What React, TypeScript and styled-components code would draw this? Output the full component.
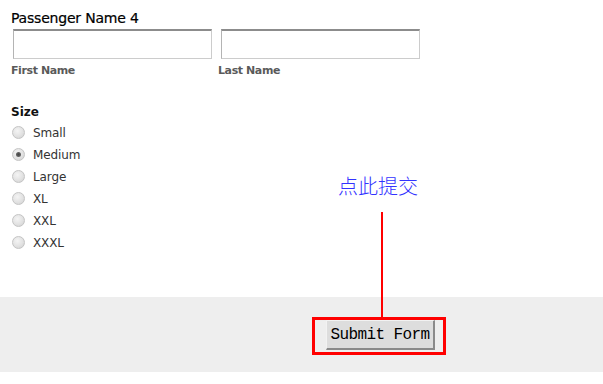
import React from "react";
import styled, { createGlobalStyle } from "styled-components";

const GlobalStyle = createGlobalStyle`
  html, body { margin: 0; padding: 0; background: #ffffff; }
  body { font-family: "DejaVu Sans", Verdana, sans-serif; }
  * { box-sizing: border-box; }
`;

const Page = styled.div`
  position: relative;
  width: 603px;
  height: 384px;
  overflow: hidden;
  background: #ffffff;
`;

const Content = styled.div`
  padding: 10px 11px 0;
  display: flex;
  flex-direction: column;
`;

const Title = styled.div`
  font-size: 14px;
  line-height: 16px;
  letter-spacing: -0.2px;
  color: #000000;
  -webkit-text-stroke: 0.2px #000;
`;

const NameRow = styled.div`
  display: grid;
  grid-template-columns: 207px 207px;
  margin-top: 3px;
`;

const Field = styled.div`
  display: flex;
  flex-direction: column;
`;

const TextInput = styled.input<{ $offset: number }>`
  width: 199px;
  height: 30px;
  margin: 0 0 0 ${(p) => p.$offset}px;
  padding: 0 4px;
  border: 1px solid #cccccc;
  border-top: 2px solid #8c8c8c;
  border-left-color: #b4b4b4;
  background: #ffffff;
  outline: none;
  font-family: "DejaVu Sans", sans-serif;
  font-size: 12px;
`;

const FieldLabel = styled.label`
  margin-top: 5px;
  font-size: 11px;
  line-height: 13px;
  font-weight: bold;
  letter-spacing: -0.4px;
  color: #5a5a5a;
`;

const SizeHeading = styled.div`
  margin-top: 28px;
  font-size: 12px;
  line-height: 14px;
  font-weight: bold;
  color: #111111;
`;

const RadioList = styled.div`
  display: flex;
  flex-direction: column;
  margin-top: 3px;
`;

const RadioRow = styled.label`
  display: flex;
  align-items: center;
  gap: 8px;
  height: 22px;
  font-size: 12px;
  line-height: 22px;
  letter-spacing: -0.1px;
  color: #333333;
`;

const RadioDot = styled.span<{ $checked: boolean }>`
  position: relative;
  width: 13px;
  height: 13px;
  margin-left: 1px;
  margin-top: -1px;
  border-radius: 50%;
  border: 1px solid #c4c4c4;
  background: radial-gradient(circle at 40% 35%, #f4f4f4 0%, #e2e2e2 55%, #cfcfcf 100%);
  &::after {
    content: "";
    display: ${(p) => (p.$checked ? "block" : "none")};
    position: absolute;
    left: 3px;
    top: 3px;
    width: 5px;
    height: 5px;
    border-radius: 50%;
    background: radial-gradient(circle, #444 0%, #666 70%, #888 100%);
  }
`;

const FooterBand = styled.div`
  margin-top: 43px;
  height: 75px;
  background: #eeeeee;
  padding: 23px 0 0 326px;
`;

const SubmitButton = styled.button`
  width: 109px;
  height: 30px;
  padding: 0;
  background: #dddddd;
  border: none;
  border-top: 1px solid #f2f2f2;
  border-left: 1px solid #f2f2f2;
  border-right: 2px solid #8a8a8a;
  border-bottom: 2px solid #8a8a8a;
  font-family: "Liberation Mono", "Courier New", monospace;
  font-size: 16px;
  letter-spacing: -0.6px;
  color: #000000;
  cursor: pointer;
`;

const Annotation = styled.div`
  position: absolute;
  left: 312px;
  top: 176px;
  width: 134px;
  display: flex;
  flex-direction: column;
  pointer-events: none;
`;

const Note = styled.div`
  align-self: center;
  margin-left: -2px;
  font-family: "Noto Sans CJK SC", sans-serif;
  font-weight: 300;
  font-size: 20px;
  line-height: 20px;
  color: #3333ff;
`;

const Pointer = styled.div`
  width: 2px;
  height: 105px;
  margin: 16px 0 0 69px;
  background: #ff0000;
`;

const Highlight = styled.div`
  width: 134px;
  height: 38px;
  border: 3px solid #ff0000;
`;

const sizes = ["Small", "Medium", "Large", "XL", "XXL", "XXXL"];

export default function App() {
  return (
    <Page>
      <GlobalStyle />
      <Content>
        <Title>Passenger Name 4</Title>
        <NameRow>
          <Field>
            <TextInput $offset={2} />
            <FieldLabel>First Name</FieldLabel>
          </Field>
          <Field>
            <TextInput $offset={3} />
            <FieldLabel>Last Name</FieldLabel>
          </Field>
        </NameRow>
        <SizeHeading>Size</SizeHeading>
        <RadioList>
          {sizes.map((s) => (
            <RadioRow key={s}>
              <RadioDot $checked={s === "Medium"} />
              {s}
            </RadioRow>
          ))}
        </RadioList>
      </Content>
      <FooterBand>
        <SubmitButton>Submit Form</SubmitButton>
      </FooterBand>
      <Annotation>
        <Note>点此提交</Note>
        <Pointer />
        <Highlight />
      </Annotation>
    </Page>
  );
}
